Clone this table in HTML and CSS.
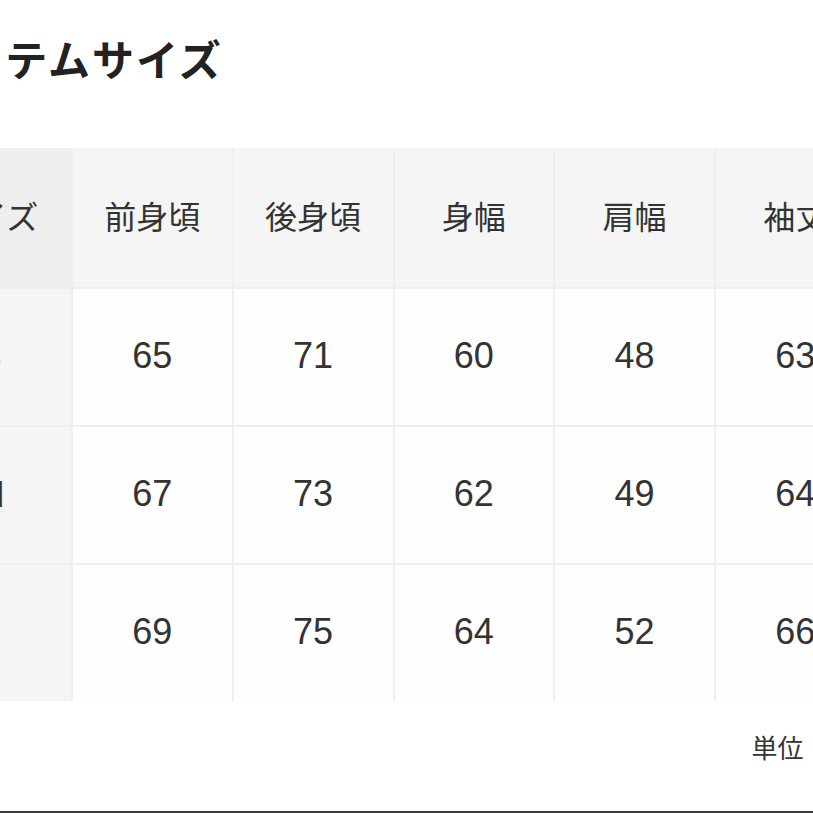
FILE: index.html
```html
<!DOCTYPE html>
<html lang="ja">
<head>
<meta charset="utf-8">
<title>アイテムサイズ</title>
<link rel="stylesheet" href="styles.css">
</head>
<body>
<div class="page">
  <div class="sheet">
    <h2 class="title">アイテムサイズ</h2>
    <div class="size-table">
      <div class="cell head first">サイズ</div>
      <div class="cell head">前身頃</div>
      <div class="cell head">後身頃</div>
      <div class="cell head">身幅</div>
      <div class="cell head">肩幅</div>
      <div class="cell head">袖丈</div>

      <div class="cell label">S</div>
      <div class="cell num">65</div>
      <div class="cell num">71</div>
      <div class="cell num">60</div>
      <div class="cell num">48</div>
      <div class="cell num">63</div>

      <div class="cell label">M</div>
      <div class="cell num">67</div>
      <div class="cell num">73</div>
      <div class="cell num">62</div>
      <div class="cell num">49</div>
      <div class="cell num">64</div>

      <div class="cell label">L</div>
      <div class="cell num">69</div>
      <div class="cell num">75</div>
      <div class="cell num">64</div>
      <div class="cell num">52</div>
      <div class="cell num">66</div>
    </div>
    <p class="note">単位：cm</p>
  </div>
  <div class="bottom-rule"></div>
</div>
</body>
</html>
```
FILE: styles.css
```css
html, body {
  margin: 0;
  padding: 0;
  overflow: hidden;
  background: #ffffff;
}

.page {
  height: 813px;
  display: flex;
  flex-direction: column;
  font-family: "Noto Sans CJK JP", "Noto Sans", sans-serif;
  color: #333333;
}

.sheet {
  margin-left: -87.75px;
  width: 962.5px;
}

.title {
  margin: 33px 0 0 8px;
  font-size: 42px;
  line-height: 50px;
  font-weight: 700;
  color: #222222;
  letter-spacing: 2px;
  white-space: nowrap;
}

.size-table {
  margin-top: 65px;
  display: grid;
  grid-template-columns: repeat(6, 158.75px);
  grid-template-rows: 139px repeat(3, 136px);
  gap: 2px;
  background: #efefef;
  width: max-content;
}

.cell {
  display: flex;
  align-items: center;
  justify-content: center;
  background: #fefefe;
  white-space: nowrap;
}

.head {
  background: #f5f5f5;
  font-size: 32px;
  font-weight: 400;
  color: #333333;
  padding-bottom: 6px;
}

.head.first {
  background: #eeeeee;
  padding-right: 2px;
}

.label {
  background: #f5f5f5;
  font-family: "Liberation Sans", Arial, sans-serif;
  font-size: 36px;
  color: #333333;
  padding-right: 4px;
}

.num {
  font-family: "Liberation Sans", Arial, sans-serif;
  font-size: 36px;
  color: #333333;
  padding-bottom: 3px;
}

.note {
  margin: 28px 0 0 0;
  padding-right: 8px;
  text-align: right;
  font-size: 26px;
  line-height: 36px;
  color: #333333;
  white-space: nowrap;
}

.bottom-rule {
  margin-top: auto;
  height: 2px;
  background: #3a3a3a;
}
```
